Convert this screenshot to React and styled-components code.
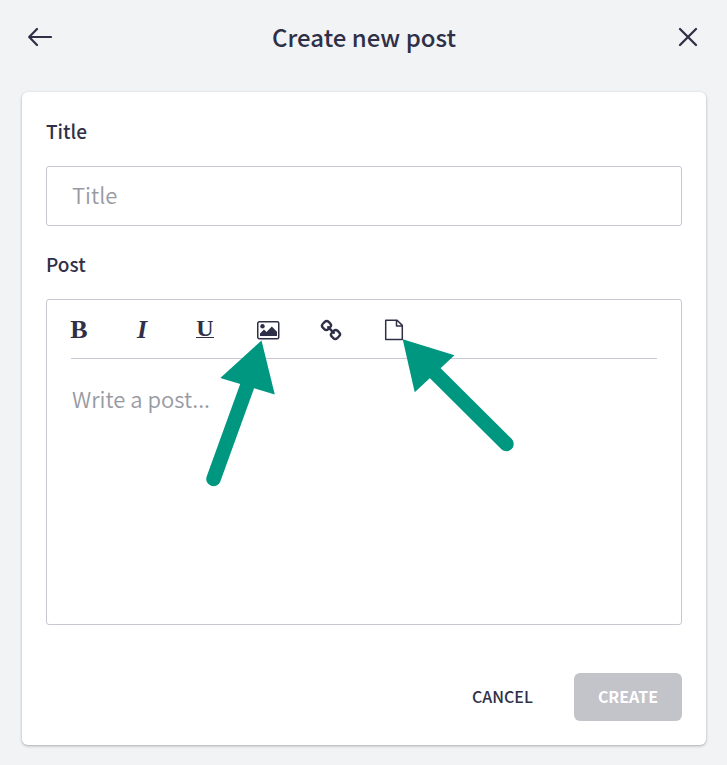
import React from "react";
import styled, { createGlobalStyle } from "styled-components";

const ink = "#2f3048";
const line = "#c8c8d3";
const muted = "#989aa3";

const GlobalStyle = createGlobalStyle`
  * { box-sizing: border-box; }
  body {
    margin: 0;
    background: #f1f3f5;
    color: ${ink};
    font-family: "Source Sans Pro", "Noto Sans CJK SC", sans-serif;
  }
  button, input, textarea { font-family: inherit; color: inherit; }
`;

const Page = styled.main`
  padding: 0 21px 20px 22px;
`;

const Header = styled.header`
  display: flex;
  align-items: center;
  justify-content: space-between;
  height: 92px;
  padding: 0 6px 18px;
`;

const Heading = styled.h1`
  margin: 0;
  font-size: 24px;
  line-height: 32px;
  font-weight: 500;
`;

const IconButton = styled.button`
  display: flex;
  align-items: center;
  justify-content: center;
  width: 24px;
  height: 24px;
  padding: 0;
  border: 0;
  background: none;
  font: bold ${(p) => p.$size || 26}px/24px "Liberation Serif", serif;
  cursor: pointer;

  svg { flex: none; }
`;

const Underlined = styled.span`
  height: 16px;
  line-height: 12px;
  border-bottom: 1px solid ${ink};
`;

const Card = styled.form`
  padding: 24px;
  border-radius: 6px;
  background: #fff;
  box-shadow: 0 1px 3px rgba(0, 0, 0, 0.3);
`;

const Field = styled.div`
  display: flex;
  flex-direction: column;
  gap: 20px;
  margin-bottom: ${(p) => p.$gap}px;
`;

const Label = styled.label`
  font-size: 19px;
  line-height: 30px;
  font-weight: 500;
`;

const TitleInput = styled.input`
  width: 100%;
  height: 60px;
  padding: 0 25px 4px;
  border: 1px solid ${line};
  border-radius: 3px;
  background: #fff;
  font-size: 22px;
  font-weight: 350;

  &::placeholder { color: ${muted}; opacity: 1; }
`;

const Editor = styled.div`
  position: relative;
  border: 1px solid ${line};
  border-radius: 3px;
`;

const Toolbar = styled.div`
  display: flex;
  align-items: center;
  gap: 39px;
  height: 58px;
  padding: 2px 20px 0;
`;

const Divider = styled.hr`
  margin: 0 24px;
  border: 0;
  border-top: 1px solid ${line};
`;

const Body = styled.textarea`
  display: block;
  width: 100%;
  height: 265px;
  padding: 23px 25px;
  border: 0;
  resize: none;
  background: none;
  font-size: 22px;
  line-height: 32px;
  font-weight: 350;

  &::placeholder { color: ${muted}; opacity: 1; }
`;

const Pointers = styled.svg`
  position: absolute;
  top: 0;
  left: 0;
  pointer-events: none;
`;

const Actions = styled.div`
  display: flex;
  justify-content: flex-end;
  gap: 17px;
`;

const ActionButton = styled.button`
  height: 48px;
  padding: 0 24px 2px;
  border: 0;
  border-radius: 6px;
  background: ${(p) => (p.$primary ? "#c3c3ca" : "transparent")};
  color: ${(p) => (p.$primary ? "#fff" : ink)};
  font-size: 16px;
  font-weight: ${(p) => (p.$primary ? 700 : 500)};
`;

const BackIcon = () => (
  <svg width="24" height="20" viewBox="0 0 24 20" fill="none" stroke={ink} strokeWidth="2.2" strokeLinecap="round" strokeLinejoin="round">
    <path d="M9 2 1.2 10 9 18M1.5 10H23" />
  </svg>
);

const CloseIcon = () => (
  <svg width="20" height="20" viewBox="0 0 20 20" fill="none" stroke={ink} strokeWidth="2.3" strokeLinecap="round">
    <path d="m2 2 16 16M18 2 2 18" />
  </svg>
);

const ImageIcon = () => (
  <svg width="24" height="20" viewBox="0 0 24 20">
    <rect x="1.75" y="1.75" width="21" height="17" rx="1.5" fill="none" stroke={ink} strokeWidth="1.5" />
    <circle cx="6.5" cy="6.3" r="2.2" fill={ink} />
    <path d="M4 16v-2.5l4-4 2.5 2.5 5.3-5.5 5.2 5.2V16z" fill={ink} />
  </svg>
);

const LinkIcon = () => (
  <svg width="22" height="22" viewBox="0 0 22 22" fill="none" stroke={ink} strokeWidth="2.4" strokeLinecap="round">
    <rect x="2.7" y="2.4" width="7.6" height="8.2" rx="2.8" transform="rotate(45 6.5 6.5)" />
    <rect x="11.7" y="11.4" width="7.6" height="8.2" rx="2.8" transform="rotate(45 15.5 15.5)" />
    <path d="m8.2 8.2 5.6 5.6" />
  </svg>
);

const FileIcon = () => (
  <svg width="20" height="22" viewBox="0 0 20 22" fill="none" stroke={ink} strokeWidth="1.5" strokeLinejoin="round">
    <path d="M1.7 1.2h11.4l5.2 5.2v14.2H1.7zM12.5 1.2v5.9h5.8" />
  </svg>
);

export default function App() {
  return (
    <>
      <GlobalStyle />
      <Page>
        <Header>
          <IconButton type="button" aria-label="Back"><BackIcon /></IconButton>
          <Heading>Create new post</Heading>
          <IconButton type="button" aria-label="Close"><CloseIcon /></IconButton>
        </Header>
        <Card onSubmit={(e) => e.preventDefault()}>
          <Field $gap={23}>
            <Label htmlFor="title">Title</Label>
            <TitleInput id="title" type="text" placeholder="Title" />
          </Field>
          <Field $gap={48}>
            <Label htmlFor="post">Post</Label>
            <Editor>
              <Toolbar role="toolbar" aria-label="Formatting">
                <IconButton type="button" aria-label="Bold">B</IconButton>
                <IconButton type="button" aria-label="Italic"><i>I</i></IconButton>
                <IconButton type="button" aria-label="Underline" $size={24}><Underlined>U</Underlined></IconButton>
                <IconButton type="button" aria-label="Image"><ImageIcon /></IconButton>
                <IconButton type="button" aria-label="Link"><LinkIcon /></IconButton>
                <IconButton type="button" aria-label="File"><FileIcon /></IconButton>
              </Toolbar>
              <Divider />
              <Body id="post" placeholder="Write a post..." />
              <Pointers width="480" height="200" viewBox="47 300 480 200" fill="#009780" stroke="none" aria-hidden="true">
                <path d="M261.5 340.5 220.3 378l54.5 16.5z" />
                <path d="M249 381 213.5 479" stroke="#009780" strokeWidth="14.5" strokeLinecap="round" />
                <path d="m402.7 339.3 51.8 16-39.8 37z" />
                <path d="m426 364 80.5 80" stroke="#009780" strokeWidth="14.5" strokeLinecap="round" />
              </Pointers>
            </Editor>
          </Field>
          <Actions>
            <ActionButton type="button">CANCEL</ActionButton>
            <ActionButton type="submit" disabled $primary>CREATE</ActionButton>
          </Actions>
        </Card>
      </Page>
    </>
  );
}
